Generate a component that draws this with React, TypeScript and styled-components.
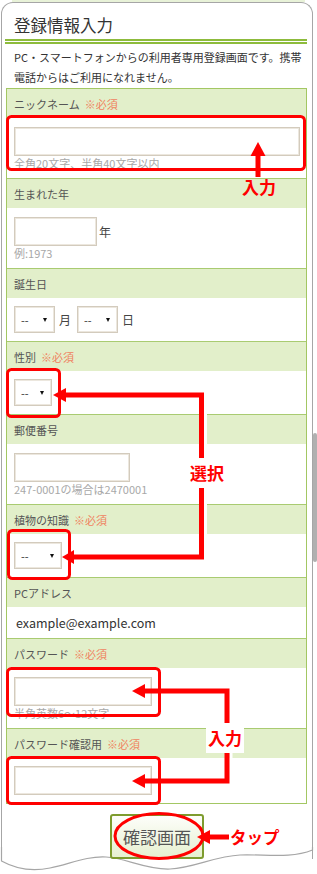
import React from "react";
import styled, { createGlobalStyle } from "styled-components";

const RED = "#ff0000";

const GlobalStyle = createGlobalStyle`
    html, body {
        margin: 0;
        padding: 0;
        background: #fff;
    }
    body {
        font-family: "Noto Sans CJK JP", "Noto Sans", sans-serif;
        color: #444;
    }
    * {
        box-sizing: border-box;
    }
`;

const Page = styled.div`
    position: relative;
    width: 317px;
    height: 874px;
    overflow: hidden;
`;

const TopStrip = styled.div`
    height: 2px;
    margin: 0 12px;
    background: #e8f2d8;
`;

const Frame = styled.div`
    margin-left: 1px;
    width: 312px;
    border: 1px solid #a6a6a6;
    border-bottom: none;
    border-radius: 12px 12px 0 0;
    background: #fff;
`;

const Title = styled.h1`
    margin: 0;
    padding: 11px 0 0 12px;
    font-size: 16.5px;
    font-weight: 400;
    line-height: 23px;
    color: #333;
`;

const DoubleRule = styled.div`
    margin: 2px 5px 0 3px;
    height: 5px;
    border-top: 2px solid #8dbb3c;
    border-bottom: 2px solid #8dbb3c;
`;

const Description = styled.p`
    margin: 0;
    padding: 3px 4px 1px 12px;
    font-size: 11px;
    line-height: 20px;
    color: #333;
`;

const FormTable = styled.div`
    margin: 0 5px 0 4px;
    border: 1px solid #a3c763;
`;

const Section = styled.div`
    & + & {
        border-top: 1px solid #a9cb71;
    }
`;

const LabelRow = styled.div`
    height: 29px;
    padding: 0 7px;
    display: flex;
    align-items: center;
    gap: 5px;
    background: #e2efca;
    font-size: 11px;
    color: #555;
`;

const Required = styled.span`
    color: #f0825f;
`;

const FieldRow = styled.div<{ $hint?: boolean; $h?: number }>`
    background: #fff;
    padding: ${p => (p.$hint ? "9px 6px 8px 7px" : "8px 6px 8px 7px")};
    ${p => (p.$h ? `height: ${p.$h}px; display: flex; align-items: center;` : "")}
`;

const InlineRow = styled.div<{ $gap?: number }>`
    display: flex;
    align-items: center;
    gap: ${p => p.$gap ?? 4}px;
`;

const TextInput = styled.input<{ $w?: number }>`
    display: block;
    width: ${p => (p.$w ? `${p.$w}px` : "100%")};
    height: 29px;
    margin: 0;
    border: 1px solid #d3cbbd;
    box-shadow: inset 0 0 0 1px #ece7de;
    background: #fff;
    outline: none;
`;

const SelectWrap = styled.span`
    position: relative;
    display: inline-block;
    &::after {
        content: "";
        position: absolute;
        right: 8px;
        top: 12px;
        border-left: 2.5px solid transparent;
        border-right: 2.5px solid transparent;
        border-top: 4px solid #111;
    }
`;

const Select = styled.select<{ $w: number }>`
    display: block;
    width: ${p => p.$w}px;
    height: 27px;
    margin: 0;
    padding: 0 0 0 6px;
    appearance: none;
    border: 1px solid #d3cbbd;
    box-shadow: inset 0 0 0 1px #ece7de;
    border-radius: 0;
    background: #fff;
    font-family: "Noto Sans CJK JP", sans-serif;
    font-size: 11px;
    color: #333;
`;

const Unit = styled.span`
    font-size: 12px;
    color: #444;
    margin-right: 2px;
`;

const Hint = styled.div`
    font-size: 11px;
    line-height: 14px;
    color: #a8a8a8;
`;

const Value = styled.span`
    padding-left: 2px;
    font-size: 12.5px;
    color: #333;
`;

const ButtonBar = styled.div`
    position: relative;
    z-index: 1;
    display: flex;
    justify-content: center;
    margin: 10px 0 -12px;
`;

const ConfirmButton = styled.button`
    width: 94px;
    height: 45px;
    padding: 0;
    border: 2px solid #7e9c2e;
    border-radius: 3px;
    background: linear-gradient(#fdfefa, #e6f0d0);
    font-family: "Noto Sans CJK JP", sans-serif;
    font-size: 17px;
    color: #555;
`;

const Wave = styled.svg`
    display: block;
`;

const ScrollThumb = styled.div`
    position: absolute;
    left: 313px;
    top: 433px;
    width: 4px;
    height: 129px;
    border-radius: 2px;
    background: #b0b0b0;
`;

const Overlay = styled.svg`
    position: absolute;
    left: 0;
    top: 0;
    z-index: 2;
    pointer-events: none;
`;

const Callout = styled.span<{ $x: number; $y: number; $white?: boolean; $size?: number }>`
    position: absolute;
    z-index: 3;
    left: ${p => p.$x}px;
    top: ${p => p.$y}px;
    padding: ${p => (p.$white ? "5px 2px" : "0")};
    background: ${p => (p.$white ? "#fff" : "transparent")};
    font-size: ${p => p.$size ?? 17}px;
    font-weight: 700;
    line-height: 20px;
    color: ${RED};
    white-space: nowrap;
`;

const Annotations: React.FC = () => (
    <Overlay width={317} height={874} viewBox="0 0 317 874">
        <g fill="none" stroke={RED} strokeWidth={3}>
            <rect x={7.5} y={116.5} width={297} height={53} rx={4} />
            <rect x={7.5} y={369.5} width={52} height={47} rx={4} />
            <rect x={8.5} y={530.5} width={61} height={48} rx={4} />
            <rect x={7.5} y={668.5} width={152} height={47} rx={4} />
            <rect x={7.5} y={757.5} width={152} height={46} rx={4} />
            <ellipse cx={159} cy={836} rx={44} ry={22.5} />
        </g>
        <g fill="#fff">
            <rect x={204} y={398} width={3} height={157} />
            <rect x={229.5} y={694} width={3} height={85} />
        </g>
        <g fill="none" stroke={RED} strokeWidth={5} strokeLinejoin="miter">
            <line x1={258} y1={153} x2={258} y2={177} />
            <polyline points="64,395 201.5,395 201.5,557 72,557" />
            <polyline points="143,691 227,691 227,781 143,781" />
            <line x1={208} y1={837} x2={229} y2={837} />
        </g>
        <g fill={RED}>
            <polygon points="258,142 250.5,156 265.5,156" />
            <polygon points="53,395 66,388 66,402" />
            <polygon points="62,557 74,550 74,564" />
            <polygon points="132,691 145,684 145,698" />
            <polygon points="132,781 145,774 145,788" />
            <polygon points="197,837 210,830 210,844" />
        </g>
    </Overlay>
);

const App: React.FC = () => {
    return (
        <Page>
            <GlobalStyle />
            <TopStrip />
            <Frame>
                <Title>登録情報入力</Title>
                <DoubleRule />
                <Description>
                    PC・スマートフォンからの利用者専用登録画面です。携帯
                    <br />
                    電話からはご利用になれません。
                </Description>

                <FormTable>
                    <Section>
                        <LabelRow>ニックネーム<Required>※必須</Required></LabelRow>
                        <FieldRow $hint>
                            <TextInput />
                            <Hint>全角20文字、半角40文字以内</Hint>
                        </FieldRow>
                    </Section>
                    <Section>
                        <LabelRow>生まれた年</LabelRow>
                        <FieldRow $hint>
                            <InlineRow $gap={2}>
                                <TextInput $w={83} />
                                <Unit>年</Unit>
                            </InlineRow>
                            <Hint>例:1973</Hint>
                        </FieldRow>
                    </Section>
                    <Section>
                        <LabelRow>誕生日</LabelRow>
                        <FieldRow>
                            <InlineRow>
                                <SelectWrap>
                                    <Select $w={41}><option>--</option></Select>
                                </SelectWrap>
                                <Unit>月</Unit>
                                <SelectWrap>
                                    <Select $w={41}><option>--</option></Select>
                                </SelectWrap>
                                <Unit>日</Unit>
                            </InlineRow>
                        </FieldRow>
                    </Section>
                    <Section>
                        <LabelRow>性別<Required>※必須</Required></LabelRow>
                        <FieldRow>
                            <InlineRow>
                                <SelectWrap>
                                    <Select $w={38}><option>--</option></Select>
                                </SelectWrap>
                            </InlineRow>
                        </FieldRow>
                    </Section>
                    <Section>
                        <LabelRow>郵便番号</LabelRow>
                        <FieldRow $hint>
                            <TextInput $w={116} />
                            <Hint>247-0001の場合は2470001</Hint>
                        </FieldRow>
                    </Section>
                    <Section>
                        <LabelRow>植物の知識<Required>※必須</Required></LabelRow>
                        <FieldRow>
                            <InlineRow>
                                <SelectWrap>
                                    <Select $w={48}><option>--</option></Select>
                                </SelectWrap>
                            </InlineRow>
                        </FieldRow>
                    </Section>
                    <Section>
                        <LabelRow>PCアドレス</LabelRow>
                        <FieldRow $h={31}>
                            <Value>example@example.com</Value>
                        </FieldRow>
                    </Section>
                    <Section>
                        <LabelRow>パスワード<Required>※必須</Required></LabelRow>
                        <FieldRow $hint>
                            <TextInput $w={138} type="password" />
                            <Hint>半角英数6～12文字</Hint>
                        </FieldRow>
                    </Section>
                    <Section>
                        <LabelRow>パスワード確認用<Required>※必須</Required></LabelRow>
                        <FieldRow>
                            <TextInput $w={138} type="password" />
                        </FieldRow>
                    </Section>
                </FormTable>

                <ButtonBar>
                    <ConfirmButton>確認画面</ConfirmButton>
                </ButtonBar>
            </Frame>
            <Wave width={317} height={26} viewBox="0 0 317 26">
                <path
                    d="M1.5 0 L1.5 14 C14 21, 30 25, 50 21 C70 17, 86 9, 106 10 C126 11, 146 23, 170 22 C194 21, 215 9, 240 8 C265 7, 290 12, 312.5 3 L312.5 0"
                    fill="none"
                    stroke="#a6a6a6"
                    strokeWidth={1.2}
                />
            </Wave>

            <ScrollThumb />
            <Annotations />
            <Callout $x={242} $y={177}>入力</Callout>
            <Callout $x={188} $y={458} $white>選択</Callout>
            <Callout $x={206} $y={723} $white>入力</Callout>
            <Callout $x={230} $y={827} $size={16.5}>タップ</Callout>
        </Page>
    );
};

export default App;
